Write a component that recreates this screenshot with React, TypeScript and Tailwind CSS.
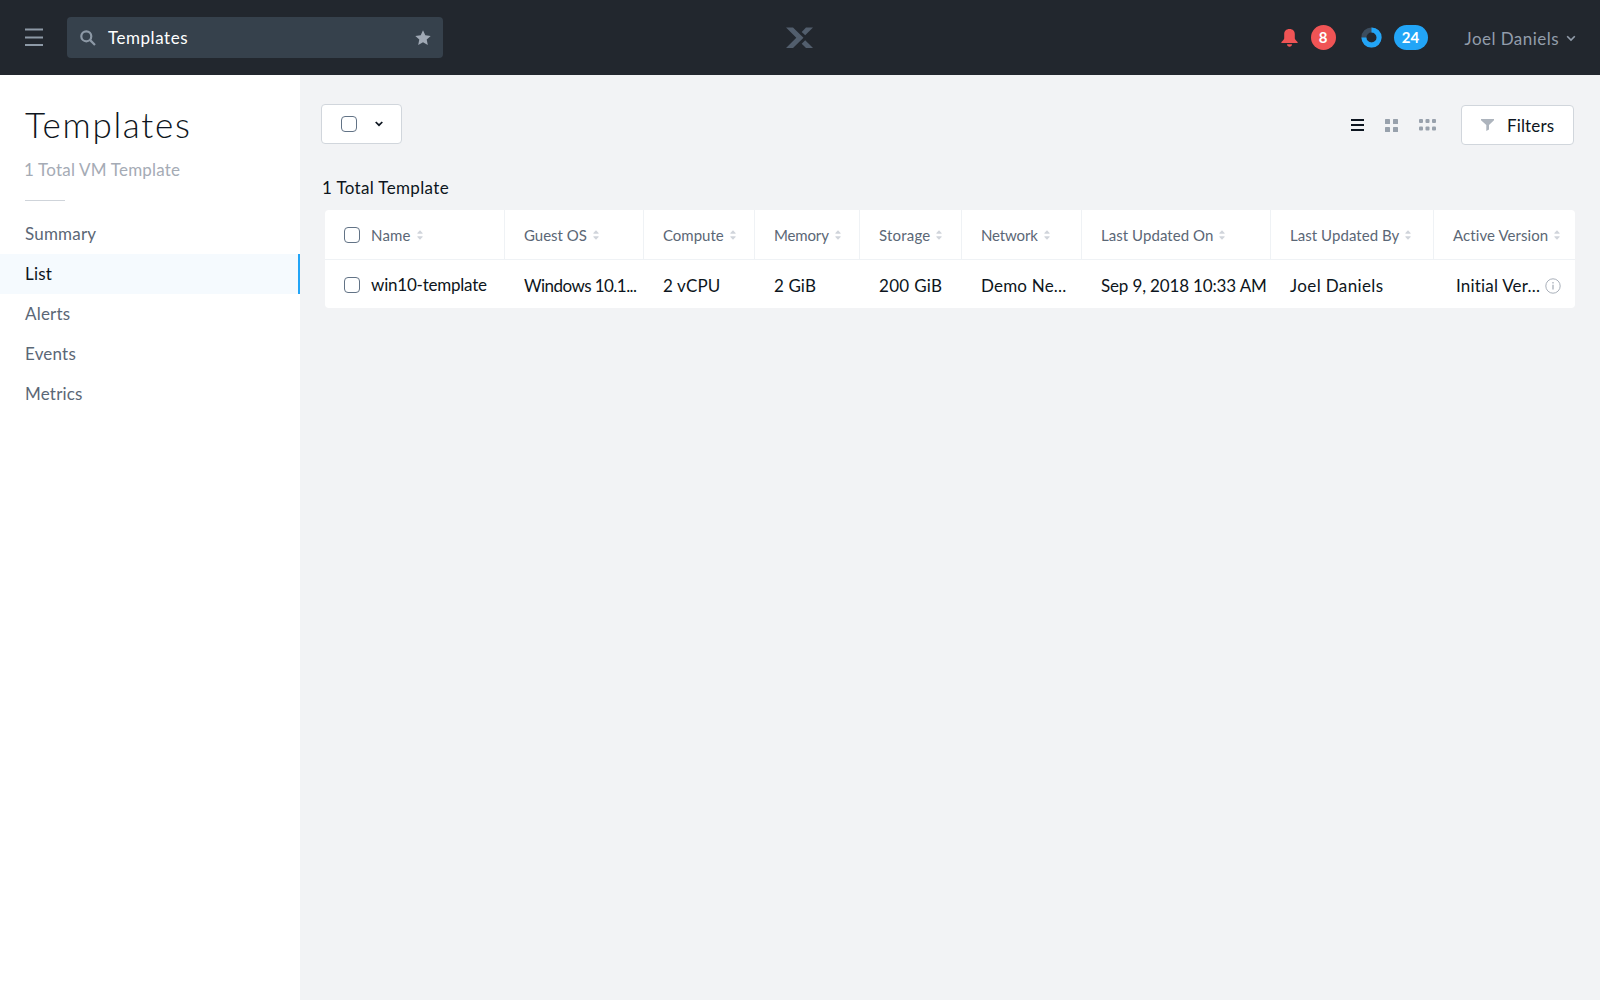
import { clsx } from "clsx";

const navItems = ["Summary", "List", "Alerts", "Events", "Metrics"];

const columns = [
  { label: "Name", value: "win10-template", width: "w-[180px]", head: "tracking-[0.15px]", cell: "tracking-[-0.22px]" },
  { label: "Guest OS", value: "Windows 10.1...", width: "w-[139px]", head: "tracking-[0px]", cell: "tracking-[-0.55px]" },
  { label: "Compute", value: "2 vCPU", width: "w-[111px]", head: "tracking-[0px]", cell: "tracking-[0.15px]" },
  { label: "Memory", value: "2 GiB", width: "w-[105px]", head: "tracking-[-0.15px]", cell: "tracking-[0.1px]" },
  { label: "Storage", value: "200 GiB", width: "w-[102px]", head: "tracking-[0.2px]", cell: "tracking-[0.3px]" },
  { label: "Network", value: "Demo Ne...", width: "w-[120px]", head: "tracking-[-0.15px]", cell: "tracking-[0.2px]" },
  { label: "Last Updated On", value: "Sep 9, 2018 10:33 AM", width: "w-[189px]", head: "tracking-[0.05px]", cell: "tracking-[-0.15px]" },
  { label: "Last Updated By", value: "Joel Daniels", width: "w-[163px]", head: "tracking-[0.05px]", cell: "tracking-[0.38px]" },
  { label: "Active Version", value: "Initial Ver...", width: "w-[141px]", head: "tracking-[0.08px]", cell: "tracking-[0.2px]" },
];

const Checkbox = () => (
  <span className="block w-4 h-4 shrink-0 rounded-[4px] border border-[#627386] bg-white"></span>
);

const SortIcon = () => (
  <svg width="6" height="10" viewBox="0 0 6 10" fill="#d0d4db" className="shrink-0">
    <path d="M3 0.3 5.6 3v0.8H0.4V3z" />
    <path d="M3 9.7 5.6 7v-0.8H0.4V7z" />
  </svg>
);

const Header = () => (
  <header className="h-[75px] shrink-0 bg-[#22272e] grid grid-cols-[1fr_auto_1fr] items-center">
    <div className="flex items-center pl-[25px]">
      <svg width="18" height="19" viewBox="0 0 18 19" fill="#8d99a6">
        <rect y="0.5" width="18" height="2" />
        <rect y="8.5" width="18" height="2" />
        <rect y="16" width="18" height="2" />
      </svg>
      <div className="ml-6 w-[376px] h-[41px] rounded-[4px] bg-[#36414c] flex items-center pl-[13px] pr-3">
        <svg width="16" height="16" viewBox="0 0 16 16" fill="none" stroke="#8d99a6" strokeWidth="2.2">
          <circle cx="6.3" cy="6.3" r="5" />
          <path d="M9.9 9.9 15 15" />
        </svg>
        <span className="ml-3 pt-px text-[17px] tracking-[0.54px] text-white flex-1">Templates</span>
        <svg width="16" height="16" viewBox="0 0 16 16" fill="#a0a9b5">
          <path d="M8 0.3 10.3 5.3 15.7 5.9 11.7 9.6 12.8 15 8 12.3 3.2 15 4.3 9.6 0.3 5.9 5.7 5.3z" />
        </svg>
      </div>
    </div>

    <svg width="28" height="22" viewBox="0 0 28 22" fill="#525e6d">
      <path d="M0 0.5H7L17.5 10.8 7 21H0L10.3 10.8z" />
      <path d="M20 0.5H27L19.2 8.3 15.7 4.9z" />
      <path d="M20 21H27L19.2 13.3 15.7 16.7z" />
    </svg>

    <div className="flex items-center justify-end pr-6">
      <svg width="17" height="18" viewBox="0 0 17 18" fill="#f05455">
        <path d="M8.5 0C12 0 13.8 2.2 13.8 5.2V9.5C13.8 11 16.8 12.2 16.8 14H0.2C0.2 12.2 3.2 11 3.2 9.5V5.2C3.2 2.2 5 0 8.5 0z" />
        <path d="M6 15.3H11C11 16.9 10 17.8 8.5 17.8S6 16.9 6 15.3z" />
      </svg>
      <span className="ml-[13px] w-[25px] h-[25px] rounded-full bg-[#f05455] text-white text-[15px] font-bold flex items-center justify-center">8</span>
      <svg width="21" height="21" viewBox="0 0 21 21" fill="none" strokeWidth="5" className="ml-[25px]">
        <circle cx="10.5" cy="10.5" r="7.6" stroke="#3c4d5e" />
        <path d="M10.5 2.9A7.6 7.6 0 1 1 2.9 10.5" stroke="#22a5f7" />
      </svg>
      <span className="ml-3 w-[34px] h-[25px] rounded-full bg-[#22a5f7] text-white text-[15px] font-bold tracking-[0.2px] flex items-center justify-center">24</span>
      <span className="ml-[37px] pt-[2px] text-[17px] tracking-[0.46px] text-[#929dab]">Joel Daniels</span>
      <svg width="10" height="7" viewBox="0 0 10 7" fill="none" stroke="#929dab" strokeWidth="1.6" className="ml-[7px] mt-[2px]">
        <path d="M1.2 1.2 5 5 8.8 1.2" />
      </svg>
    </div>
  </header>
);

const Sidebar = () => (
  <aside className="w-[300px] shrink-0 bg-white">
    <h1 className="pl-[25px] pt-[29px] text-[35px] leading-10 font-light tracking-[1.7px] text-[#0d1520]">Templates</h1>
    <p className="pl-6 mt-[14px] text-[17px] leading-6 tracking-[0.2px] text-[#a5abb5]">1 Total VM Template</p>
    <div className="ml-[25px] mt-[18px] w-10 h-px bg-[#cfd4da]"></div>
    <nav className="mt-[13px]">
      {navItems.map((item) => (
        <a
          key={item}
          className={clsx(
            "flex items-center h-10 pl-[25px] text-[17px] tracking-[0.2px]",
            item === "List"
              ? "bg-[#f5fafe] border-r-2 border-[#22a5f7] text-[#0d1520]"
              : "text-[#5b6776]"
          )}
        >
          {item}
        </a>
      ))}
    </nav>
  </aside>
);

const Toolbar = () => (
  <div className="flex items-center justify-between">
    <button className="w-[81px] h-10 rounded-[4px] border border-[#d1d6dc] bg-white flex items-center pl-[19px]">
      <Checkbox />
      <svg width="8" height="6" viewBox="0 0 8 6" fill="none" stroke="#0d1520" strokeWidth="1.7" className="ml-[18px] mb-px">
        <path d="M0.7 1 4 4.2 7.3 1" />
      </svg>
    </button>
    <div className="flex items-center pt-[2px]">
      <svg width="13" height="13" viewBox="0 0 13 13" fill="#0d1520">
        <rect width="13" height="2" />
        <rect y="5" width="13" height="2" />
        <rect y="10" width="13" height="2" />
      </svg>
      <svg width="13" height="13" viewBox="0 0 13 13" fill="#98a1ac" className="ml-[21px]">
        <rect width="5" height="5" rx="0.6" />
        <rect x="8" width="5" height="5" rx="0.6" />
        <rect y="8" width="5" height="5" rx="0.6" />
        <rect x="8" y="8" width="5" height="5" rx="0.6" />
      </svg>
      <svg width="17" height="12" viewBox="0 0 17 12" fill="#98a1ac" className="ml-[21px]">
        <rect width="4" height="4" rx="1" />
        <rect x="6.5" width="4" height="4" rx="1" />
        <rect x="13" width="4" height="4" rx="1" />
        <rect y="7.5" width="4" height="4" rx="1" />
        <rect x="6.5" y="7.5" width="4" height="4" rx="1" />
        <rect x="13" y="7.5" width="4" height="4" rx="1" />
      </svg>
      <button className="ml-[25px] w-[113px] h-10 rounded-[4px] border border-[#d1d6dc] bg-white flex items-center pl-[19px]">
        <svg width="13" height="12" viewBox="0 0 13 12" fill="#adb4bd">
          <path d="M0 0H13V1.2L8 6V10.5L5.3 12V6L0 1.2z" />
        </svg>
        <span className="ml-[13px] pt-px text-[17px] tracking-[0.15px] text-[#0d1520]">Filters</span>
      </button>
    </div>
  </div>
);

const TemplateTable = () => (
  <div className="ml-1 w-[1250px] rounded-[4px] bg-white overflow-hidden">
    {/* Header */}
    <div className="flex h-[50px] border-b border-[#eff2f5]">
      {columns.map((col, idx) => (
        <div
          key={col.label}
          className={clsx(
            "flex items-center pl-[19px] shrink-0 whitespace-nowrap text-[15px] text-[#5b6776]",
            col.width,
            col.head,
            idx < columns.length - 1 && "border-r border-[#eff2f5]"
          )}
        >
          {idx === 0 && (
            <span className="mr-[11px]">
              <Checkbox />
            </span>
          )}
          <span className="mr-[6px] pt-px">{col.label}</span>
          <SortIcon />
        </div>
      ))}
    </div>

    {/* Row */}
    <div className="flex h-[48px]">
      {columns.map((col, idx) => (
        <div
          key={col.label}
          className={clsx(
            "flex items-center shrink-0 whitespace-nowrap text-[17px] text-[#0d1520]",
            col.width,
            col.cell,
            idx === columns.length - 1 ? "pl-[22px]" : "pl-[19px]",
            idx > 0 ? "pt-[3px]" : "pt-px"
          )}
        >
          {idx === 0 && (
            <span className="mr-[11px]">
              <Checkbox />
            </span>
          )}
          <span>{col.value}</span>
          {idx === columns.length - 1 && (
            <svg width="16" height="16" viewBox="0 0 16 16" fill="none" stroke="#a9b0ba" className="ml-[5px]">
              <circle cx="8" cy="8" r="7.2" />
              <path d="M8 6.8V11.5M8 4V5.4" strokeWidth="1.3" />
            </svg>
          )}
        </div>
      ))}
    </div>
  </div>
);

const App = () => {
  return (
    <div className="w-full h-screen flex flex-col overflow-hidden font-['Lato','Open_Sans',sans-serif]">
      <Header />
      <div className="flex flex-1">
        <Sidebar />
        <main className="flex-1 min-w-0 bg-[#f2f3f5] pl-[21px] pr-[26px] pt-[28px]">
          <Toolbar />
          <h2 className="ml-px mt-[31px] mb-[10px] text-[17px] leading-6 tracking-[0.35px] text-[#0d1520]">1 Total Template</h2>
          <TemplateTable />
        </main>
      </div>
    </div>
  );
};

export default App;
